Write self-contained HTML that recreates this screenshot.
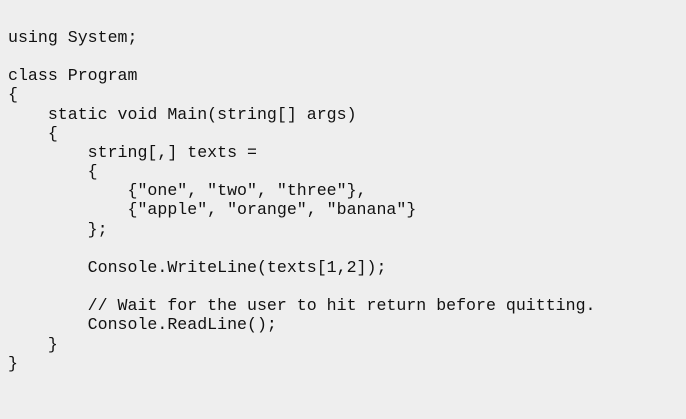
<!DOCTYPE html>
<html><head><meta charset="utf-8"><style>
html,body{margin:0;padding:0;background:#eeeeee;width:686px;height:419px;overflow:hidden}
pre{margin:0;position:absolute;left:8px;top:28px;font-family:"Liberation Mono","DejaVu Sans Mono",monospace;font-size:16.6px;line-height:19.15px;color:#111}
</style></head><body><pre>using System;

class Program
{
    static void Main(string[] args)
    {
        string[,] texts =
        {
            {"one", "two", "three"},
            {"apple", "orange", "banana"}
        };

        Console.WriteLine(texts[1,2]);

        // Wait for the user to hit return before quitting.
        Console.ReadLine();
    }
}</pre></body></html>
